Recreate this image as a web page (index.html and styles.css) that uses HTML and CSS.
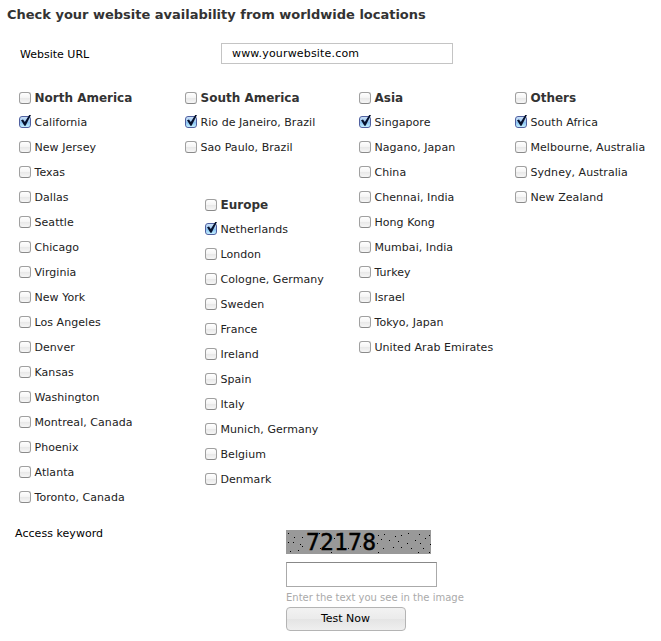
FILE: index.html
```
<!DOCTYPE html>
<html lang="en">
<head>
    <meta charset="UTF-8">
    <title>Website availability test</title>
    <link rel="stylesheet" href="styles.css">
</head>
<body>
    <h1>Check your website availability from worldwide locations</h1>

    <form>
        <div class="url-row">
            <label for="url">Website URL</label>
            <input type="text" id="url" class="url-input" value="www.yourwebsite.com">
        </div>

        <div class="locations">
            <div class="column">
                <div class="group">
                    <label class="heading"><input type="checkbox"><span>North America</span></label>
                    <label><input type="checkbox" checked><span>California</span></label>
                    <label><input type="checkbox"><span>New Jersey</span></label>
                    <label><input type="checkbox"><span>Texas</span></label>
                    <label><input type="checkbox"><span>Dallas</span></label>
                    <label><input type="checkbox"><span>Seattle</span></label>
                    <label><input type="checkbox"><span>Chicago</span></label>
                    <label><input type="checkbox"><span>Virginia</span></label>
                    <label><input type="checkbox"><span>New York</span></label>
                    <label><input type="checkbox"><span>Los Angeles</span></label>
                    <label><input type="checkbox"><span>Denver</span></label>
                    <label><input type="checkbox"><span>Kansas</span></label>
                    <label><input type="checkbox"><span>Washington</span></label>
                    <label><input type="checkbox"><span>Montreal, Canada</span></label>
                    <label><input type="checkbox"><span>Phoenix</span></label>
                    <label><input type="checkbox"><span>Atlanta</span></label>
                    <label><input type="checkbox"><span>Toronto, Canada</span></label>
                </div>
            </div>

            <div class="column">
                <div class="group">
                    <label class="heading"><input type="checkbox"><span>South America</span></label>
                    <label><input type="checkbox" checked><span>Rio de Janeiro, Brazil</span></label>
                    <label><input type="checkbox"><span>Sao Paulo, Brazil</span></label>
                </div>
                <div class="group europe">
                    <label class="heading"><input type="checkbox"><span>Europe</span></label>
                    <label><input type="checkbox" checked><span>Netherlands</span></label>
                    <label><input type="checkbox"><span>London</span></label>
                    <label><input type="checkbox"><span>Cologne, Germany</span></label>
                    <label><input type="checkbox"><span>Sweden</span></label>
                    <label><input type="checkbox"><span>France</span></label>
                    <label><input type="checkbox"><span>Ireland</span></label>
                    <label><input type="checkbox"><span>Spain</span></label>
                    <label><input type="checkbox"><span>Italy</span></label>
                    <label><input type="checkbox"><span>Munich, Germany</span></label>
                    <label><input type="checkbox"><span>Belgium</span></label>
                    <label><input type="checkbox"><span>Denmark</span></label>
                </div>
            </div>

            <div class="column">
                <div class="group">
                    <label class="heading"><input type="checkbox"><span>Asia</span></label>
                    <label><input type="checkbox" checked><span>Singapore</span></label>
                    <label><input type="checkbox"><span>Nagano, Japan</span></label>
                    <label><input type="checkbox"><span>China</span></label>
                    <label><input type="checkbox"><span>Chennai, India</span></label>
                    <label><input type="checkbox"><span>Hong Kong</span></label>
                    <label><input type="checkbox"><span>Mumbai, India</span></label>
                    <label><input type="checkbox"><span>Turkey</span></label>
                    <label><input type="checkbox"><span>Israel</span></label>
                    <label><input type="checkbox"><span>Tokyo, Japan</span></label>
                    <label><input type="checkbox"><span>United Arab Emirates</span></label>
                </div>
            </div>

            <div class="column">
                <div class="group">
                    <label class="heading"><input type="checkbox"><span>Others</span></label>
                    <label><input type="checkbox" checked><span>South Africa</span></label>
                    <label><input type="checkbox"><span>Melbourne, Australia</span></label>
                    <label><input type="checkbox"><span>Sydney, Australia</span></label>
                    <label><input type="checkbox"><span>New Zealand</span></label>
                </div>
            </div>
        </div>

        <div class="access-row">
            <label for="keyword">Access keyword</label>
            <div class="access">
                <svg class="captcha" width="145" height="24" viewBox="0 0 145 24" shape-rendering="crispEdges">
                    <rect width="145" height="24" fill="#999"/>
                    <text x="20" y="20" textLength="70">72178</text>
                    <!-- noise -->
                    <path d="M2 3h1v1h-1zM8 7h1v1h-1zM16 7h1v1h-1zM2 12h1v1h-1zM7 12h1v1h-1zM14 14h1v1h-1zM4 21h1v1h-1zM12 20h1v1h-1zM16 16h1v1h-1zM33 3h1v1h-1zM34 18h1v1h-1zM45 22h1v1h-1zM48 8h1v1h-1zM62 18h1v1h-1zM64 3h1v1h-1zM74 16h1v1h-1zM92 5h1v1h-1zM91 13h1v1h-1zM92 22h1v1h-1zM98 4h1v1h-1zM95 9h1v1h-1zM97 18h1v1h-1zM103 10h1v1h-1zM107 17h1v1h-1zM109 6h1v1h-1zM112 11h1v1h-1zM115 17h1v1h-1zM115 5h1v1h-1zM122 3h1v1h-1zM121 13h1v1h-1zM125 18h1v1h-1zM129 10h1v1h-1zM132 22h1v1h-1zM133 4h1v1h-1zM134 13h1v1h-1zM137 18h1v1h-1zM139 8h1v1h-1zM143 5h1v1h-1zM144 14h1v1h-1zM143 22h1v1h-1z"/>
                </svg>
                <input type="text" id="keyword" class="keyword-input">
                <p class="hint">Enter the text you see in the image</p>
                <button type="button">Test Now</button>
            </div>
        </div>
    </form>
</body>
</html>
```
FILE: styles.css
```
* {
    box-sizing: border-box;
}
body {
    margin: 0;
    font-family: Verdana, "DejaVu Sans", sans-serif;
    font-size: 11px;
    color: #000;
    background: #fff;
}
h1 {
    margin: 0;
    padding: 6px 0 0 7px;
    font-size: 13px;
    line-height: 18px;
    letter-spacing: -0.01px;
    color: #333;
    white-space: nowrap;
}
.url-row {
    display: flex;
    align-items: center;
    padding: 19px 0 0 20px;
}
.url-row label {
    width: 201px;
    padding-top: 1px;
}
.url-input {
    width: 232px;
    height: 21px;
    padding: 0 10px;
    border: 1px solid #c4c4c4;
    font: inherit;
    letter-spacing: 0.18px;
}
.locations {
    display: grid;
    grid-template-columns: 166px 174px 156px 1fr;
    padding: 22px 0 0 19px;
}
.group {
    display: flex;
    flex-direction: column;
    color: #222;
}
.europe {
    margin: 33px 0 0 20px;
}
.group label {
    display: flex;
    align-items: center;
    gap: 3.5px;
    height: 25px;
    letter-spacing: 0.05px;
    white-space: nowrap;
}
.group .heading {
    height: 24px;
    font-size: 12px;
    font-weight: bold;
    letter-spacing: 0;
    color: #333;
}
.heading span {
    padding-bottom: 1px;
}
input[type="checkbox"] {
    appearance: none;
    position: relative;
    width: 12px;
    height: 12px;
    margin: 0 0 1px;
    border: 1px solid #a0a0a0;
    border-bottom-color: #8a8a8a;
    border-radius: 3px;
    background: linear-gradient(#fff, #f4f4f4 50%, #e8e8e8 50%, #f6f6f6);
}
.heading input[type="checkbox"] {
    margin: 0;
}
input[type="checkbox"]:checked {
    border-color: #5060a0;
    background: linear-gradient(#c9e0f8, #9cc8f2 50%, #86c0f2 50%, #c4f0ff);
}
/* tick sticks out of the top right corner of the box */
input[type="checkbox"]:checked::after {
    content: "";
    position: absolute;
    left: 1px;
    top: -2px;
    width: 10px;
    height: 11px;
    background: #06122e;
    clip-path: polygon(0 48%, 20% 40%, 38% 64%, 82% 0, 100% 0, 46% 98%, 34% 98%);
}
.access-row {
    display: flex;
    padding: 20px 0 0 15px;
}
.access-row > label {
    width: 271px;
    line-height: 14px;
    margin-top: -3px;
    letter-spacing: 0.05px;
}
.access {
    display: flex;
    flex-direction: column;
    align-items: flex-start;
}
.captcha {
    display: block;
}
.captcha text {
    font-family: "DejaVu Sans Mono", monospace;
    font-size: 23px;
    stroke: #000;
    stroke-width: 0.4px;
}
.keyword-input {
    width: 151px;
    height: 25px;
    margin-top: 8px;
    border: 1px solid #aaa;
    border-top-color: #888;
}
.hint {
    margin: 3px 0 2px;
    font-size: 10px;
    line-height: 15px;
    color: #aaa;
}
button {
    width: 120px;
    height: 24px;
    padding: 0 1px 2px 0;
    border: 1px solid #b4b4b4;
    border-radius: 4px;
    background: linear-gradient(#f2f2f2, #ebebeb 50%, #e4e4e4 50%, #efefef);
    font: inherit;
    color: #000;
}
```
